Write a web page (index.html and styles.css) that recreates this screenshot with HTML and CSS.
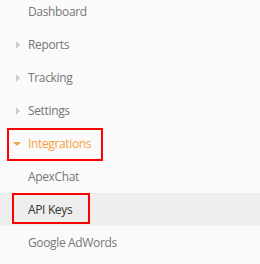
FILE: index.html
```html
<!DOCTYPE html>
<html lang="en">
<head>
  <meta charset="UTF-8" />
  <title>Menu</title>
  <link rel="stylesheet" href="styles.css">
</head>
<body>
  <ul class="menu">
    <li class="item">Dashboard</li>
    <li class="item has-sub"><span class="caret"></span>Reports</li>
    <li class="item has-sub"><span class="caret"></span>Tracking</li>
    <li class="item has-sub"><span class="caret"></span>Settings</li>
    <li class="item has-sub open"><span class="mark mark-open"></span><span class="caret down"></span>Integrations</li>
    <li class="item sub">ApexChat</li>
    <li class="item sub active"><span class="mark mark-keys"></span>API Keys</li>
    <li class="item sub">Google AdWords</li>
  </ul>
</body>
</html>
```

FILE: styles.css
```css
* { margin: 0; padding: 0; box-sizing: border-box; }
body {
  background: #fafafa;
  font-family: "Open Sans", sans-serif;
  font-size: 12px;
  letter-spacing: -0.35px;
}
.menu {
  list-style: none;
  margin-top: -5px;
}
.item {
  position: relative;
  height: 33px;
  line-height: 33px;
  padding-left: 28px;
  color: #777;
}
.caret {
  position: absolute;
  left: 16px;
  top: 13px;
  width: 0;
  height: 0;
  border-top: 4px solid transparent;
  border-bottom: 4px solid transparent;
  border-left: 4px solid #ccc;
}
.caret.down {
  left: 13px;
  top: 15px;
  border-left: 4px solid transparent;
  border-right: 4px solid transparent;
  border-top: 4px solid #f7a13a;
  border-bottom: 0;
}
.open { color: #f7a13a; }
.active { background: #eee; color: #333; }
.mark {
  position: absolute;
  border: 2px solid #f00;
}
.mark-open { left: 7px; top: 1px; width: 96px; height: 33px; }
.mark-keys { left: 12px; top: 0; width: 78px; height: 31px; }
```
